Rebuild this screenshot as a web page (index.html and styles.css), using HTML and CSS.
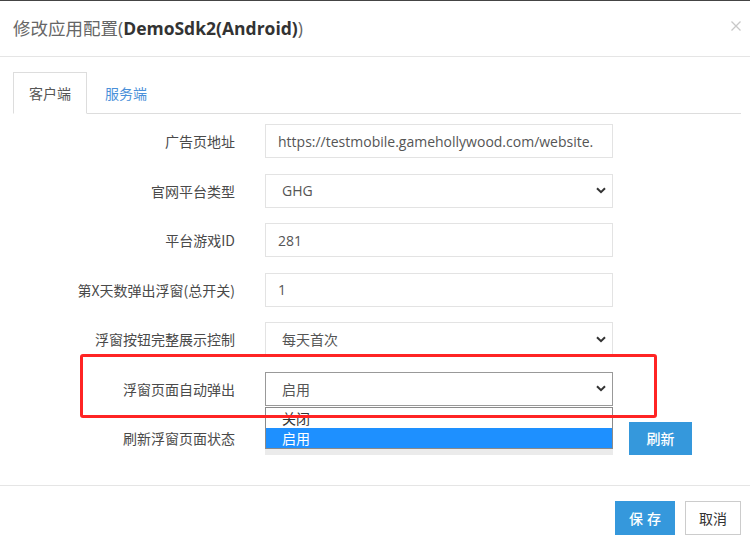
FILE: index.html
```html
<!DOCTYPE html>
<html lang="zh-CN">
<head>
<meta charset="utf-8">
<title>修改应用配置</title>
<link rel="stylesheet" href="styles.css">
</head>
<body>
<div class="modal">
  <div class="modal-header">
    <h4 class="modal-title">修改应用配置(<b>DemoSdk2(Android)</b>)</h4>
    <span class="close">
      <svg width="10" height="10" viewBox="0 0 10 10"><path d="M0.5 0.5 L9.5 9.5 M9.5 0.5 L0.5 9.5" stroke="#c8c8c8" stroke-width="1.3" fill="none"/></svg>
    </span>
  </div>
  <div class="modal-body">
    <ul class="tabs">
      <li class="tab active">客户端</li>
      <li class="tab">服务端</li>
    </ul>
    <div class="form">
      <div class="row">
        <label class="label">广告页地址</label>
        <div class="control input"><span class="value">https://testmobile.gamehollywood.com/website.</span></div>
      </div>
      <div class="row">
        <label class="label">官网平台类型</label>
        <div class="control select"><span class="value">GHG</span><svg class="chev" width="10" height="7" viewBox="0 0 10 7"><path d="M1 1.2 L5 5.2 L9 1.2" stroke="#333" stroke-width="2" fill="none"/></svg></div>
      </div>
      <div class="row">
        <label class="label">平台游戏ID</label>
        <div class="control input"><span class="value">281</span></div>
      </div>
      <div class="row">
        <label class="label">第X天数弹出浮窗(总开关)</label>
        <div class="control input"><span class="value">1</span></div>
      </div>
      <div class="row">
        <label class="label">浮窗按钮完整展示控制</label>
        <div class="control select"><span class="value">每天首次</span><svg class="chev" width="10" height="7" viewBox="0 0 10 7"><path d="M1 1.2 L5 5.2 L9 1.2" stroke="#333" stroke-width="2" fill="none"/></svg></div>
      </div>
      <div class="row">
        <label class="label">浮窗页面自动弹出</label>
        <div class="control select focused"><span class="value">启用</span><svg class="chev" width="10" height="7" viewBox="0 0 10 7"><path d="M1 1.2 L5 5.2 L9 1.2" stroke="#333" stroke-width="2" fill="none"/></svg></div>
      </div>
      <div class="row">
        <label class="label">刷新浮窗页面状态</label>
        <div class="control input"><span class="value"></span></div>
        <button class="btn btn-primary refresh">刷新</button>
      </div>
    </div>
  </div>
  <div class="modal-footer">
    <button class="btn btn-primary save">保存</button>
    <button class="btn btn-default">取消</button>
  </div>

  <div class="dropdown-list">
    <div class="option">关闭</div>
    <div class="option selected">启用</div>
    <div class="list-bottom"></div>
  </div>
  <div class="highlight-box"></div>
</div>
</body>
</html>
```

FILE: styles.css
```css
* { box-sizing: border-box; }
html, body {
  margin: 0;
  padding: 0;
  background: #fff;
}
body {
  font-family: "Noto Sans CJK SC", "Open Sans", sans-serif;
  color: #333;
  width: 750px;
  height: 544px;
  overflow: hidden;
}
.modal {
  position: relative;
  width: 750px;
  height: 544px;
  border-top: 1px solid #444;
}
.modal-header {
  height: 56px;
  border-bottom: 1px solid #e5e5e5;
  display: flex;
  align-items: center;
  justify-content: space-between;
  padding: 0 9px 0 13px;
}
.modal-title {
  margin: 0;
  font-weight: normal;
  font-size: 17.5px;
  color: #666;
  font-family: "Open Sans", "Noto Sans CJK SC", sans-serif;
  line-height: 1;
  margin-top: 1px;
}
.modal-title b {
  color: #333;
  font-weight: 700;
}
.close {
  display: flex;
  width: 10px;
  height: 10px;
  margin-top: -6px;
}
.modal-body {
  padding: 15px 9px 30px 13px;
}
.tabs {
  list-style: none;
  margin: 0;
  padding: 0;
  display: flex;
  height: 42px;
  border-bottom: 1px solid #ddd;
}
.tab {
  height: 42px;
  padding: 0 15px;
  display: flex;
  align-items: center;
  font-size: 14px;
  color: #4a90d9;
  border: 1px solid transparent;
  margin-right: 2px;
}
.tab.active {
  color: #555;
  border-color: #ddd;
  border-bottom-color: #fff;
  background: #fff;
  width: 74px;
}
.form {
  margin-top: 10px;
  display: flex;
  flex-direction: column;
  gap: 15.5px;
}
.row {
  display: flex;
  align-items: center;
  height: 34px;
}
.label {
  width: 222px;
  text-align: right;
  font-size: 14px;
  color: #4a4a4a;
  margin-right: 30px;
  white-space: nowrap;
}
.control {
  width: 348px;
  height: 34px;
  border: 1px solid #e3e3e3;
  display: flex;
  align-items: center;
  overflow: hidden;
  font-size: 14px;
  color: #555;
  background: #fff;
}
.control .value {
  white-space: nowrap;
  overflow: hidden;
  flex: 1;
  font-family: "Open Sans", "Noto Sans CJK SC", sans-serif;
}
.input { padding: 0 10px 0 12px; }
.select { padding: 0 6px 0 16px; }
.select.focused { border-color: #999; }
.chev { flex: none; margin-right: 0; }
.btn {
  border: 1px solid transparent;
  font-family: "Noto Sans CJK SC", sans-serif;
  font-size: 14px;
  height: 34px;
  padding: 0;
  cursor: pointer;
  display: inline-flex;
  align-items: center;
  justify-content: center;
}
.btn-primary {
  background: #3598dc;
  color: #fff;
  font-weight: 500;
}
.btn-default {
  background: #fff;
  color: #333;
  border-color: #ccc;
  width: 56px;
}
.refresh {
  width: 63px;
  height: 33px;
  margin-left: 16px;
}
.save {
  width: 60px;
  letter-spacing: 4px;
  text-indent: 4px;
}
.modal-footer {
  border-top: 1px solid #e5e5e5;
  padding: 15px 9px 0 0;
  display: flex;
  justify-content: flex-end;
  gap: 10px;
}
.dropdown-list {
  position: absolute;
  left: 265px;
  top: 406px;
  width: 348px;
  border: 1px solid #8a8a8a;
  border-bottom: none;
  background: #fff;
  font-size: 14px;
}
.option {
  height: 20px;
  line-height: 20px;
  padding-left: 16px;
  color: #333;
}
.option.selected {
  background: #1e90ff;
  color: #fff;
}
.list-bottom {
  height: 7px;
  border-top: 1px solid #8a8a8a;
  background: #ebebeb;
  margin: 0 -1px;
}
.highlight-box {
  position: absolute;
  left: 80px;
  top: 353px;
  width: 577px;
  height: 64px;
  border: 3px solid #ff2424;
  border-radius: 3px;
}
```
